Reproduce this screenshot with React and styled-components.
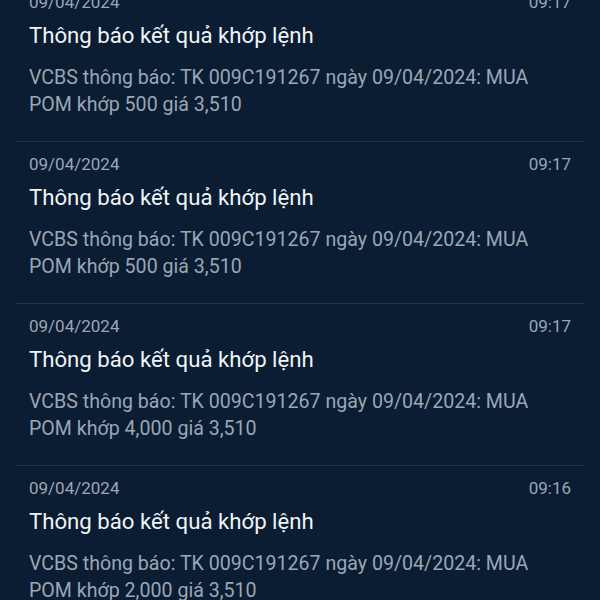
import styled, { createGlobalStyle } from 'styled-components';

const NOTIFICATIONS = [
  { date: '09/04/2024', time: '09:17', qty: '500' },
  { date: '09/04/2024', time: '09:17', qty: '500' },
  { date: '09/04/2024', time: '09:17', qty: '4,000' },
  { date: '09/04/2024', time: '09:16', qty: '2,000' },
];

const GlobalStyle = createGlobalStyle`
  html, body {
    margin: 0;
    padding: 0;
    background: #0b1d32;
    overflow: hidden;
  }
  body {
    font-family: Roboto, "Noto Sans", sans-serif;
  }
`;

export default function App() {
  return (
    <>
      <GlobalStyle />
      <List>
        {NOTIFICATIONS.map((item, i) => (
          <Item key={i}>
            <MetaRow>
              <span>{item.date}</span>
              <span>{item.time}</span>
            </MetaRow>
            <Title>Thông báo kết quả khớp lệnh</Title>
            <Body>
              VCBS thông báo: TK 009C191267 ngày {item.date}: MUA POM khớp {item.qty} giá 3,510
            </Body>
          </Item>
        ))}
      </List>
    </>
  );
}

const List = styled.div`
  margin-top: -20px;
  padding: 0 15px;
`;

const Item = styled.div`
  padding: 11px 14px 23px;
  border-bottom: 1px solid #1f334a;
`;

const MetaRow = styled.div`
  display: flex;
  justify-content: space-between;
  font-size: 17px;
  line-height: 22px;
  color: #9ba6b4;
`;

const Title = styled.div`
  margin-top: 7px;
  font-size: 22.2px;
  line-height: 30px;
  color: #f1f3f6;
`;

const Body = styled.div`
  margin-top: 14px;
  font-size: 19.6px;
  line-height: 27px;
  color: #9ba6b4;
  max-width: 545px;
`;
